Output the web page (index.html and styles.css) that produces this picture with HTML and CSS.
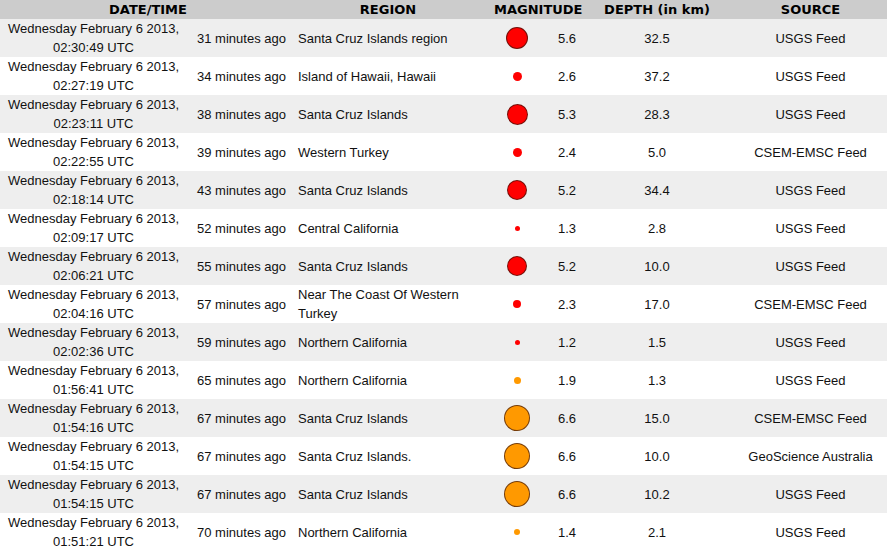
FILE: index.html
```html
<!DOCTYPE html>
<html>
<head>
<meta charset="utf-8">
<link rel="stylesheet" href="styles.css">
</head>
<body>
<table class="quakes">
  <colgroup>
    <col class="c-date"><col class="c-ago"><col class="c-region"><col class="c-dot"><col class="c-mag"><col class="c-depth"><col class="c-src">
  </colgroup>
  <thead>
    <tr><th colspan="2">DATE/TIME</th><th>REGION</th><th colspan="2" class="h-mag">MAGNITUDE</th><th>DEPTH (in km)</th><th>SOURCE</th></tr>
  </thead>
  <tbody>
    <tr><td class="date">Wednesday February 6 2013, 02:30:49 UTC</td><td class="ago">31 minutes ago</td><td class="region">Santa Cruz Islands region</td><td class="dot"><span class="q red big" style="width:22px;height:22px"></span></td><td class="mag">5.6</td><td class="depth">32.5</td><td class="src">USGS Feed</td></tr>
    <tr><td class="date">Wednesday February 6 2013, 02:27:19 UTC</td><td class="ago">34 minutes ago</td><td class="region">Island of Hawaii, Hawaii</td><td class="dot"><span class="q red" style="width:9px;height:9px"></span></td><td class="mag">2.6</td><td class="depth">37.2</td><td class="src">USGS Feed</td></tr>
    <tr><td class="date">Wednesday February 6 2013, 02:23:11 UTC</td><td class="ago">38 minutes ago</td><td class="region">Santa Cruz Islands</td><td class="dot"><span class="q red big" style="width:21px;height:21px"></span></td><td class="mag">5.3</td><td class="depth">28.3</td><td class="src">USGS Feed</td></tr>
    <tr><td class="date">Wednesday February 6 2013, 02:22:55 UTC</td><td class="ago">39 minutes ago</td><td class="region">Western Turkey</td><td class="dot"><span class="q red" style="width:9px;height:9px"></span></td><td class="mag">2.4</td><td class="depth">5.0</td><td class="src">CSEM-EMSC Feed</td></tr>
    <tr><td class="date">Wednesday February 6 2013, 02:18:14 UTC</td><td class="ago">43 minutes ago</td><td class="region">Santa Cruz Islands</td><td class="dot"><span class="q red big" style="width:20px;height:20px"></span></td><td class="mag">5.2</td><td class="depth">34.4</td><td class="src">USGS Feed</td></tr>
    <tr><td class="date">Wednesday February 6 2013, 02:09:17 UTC</td><td class="ago">52 minutes ago</td><td class="region">Central California</td><td class="dot"><span class="q red" style="width:5px;height:5px"></span></td><td class="mag">1.3</td><td class="depth">2.8</td><td class="src">USGS Feed</td></tr>
    <tr><td class="date">Wednesday February 6 2013, 02:06:21 UTC</td><td class="ago">55 minutes ago</td><td class="region">Santa Cruz Islands</td><td class="dot"><span class="q red big" style="width:20px;height:20px"></span></td><td class="mag">5.2</td><td class="depth">10.0</td><td class="src">USGS Feed</td></tr>
    <tr><td class="date">Wednesday February 6 2013, 02:04:16 UTC</td><td class="ago">57 minutes ago</td><td class="region">Near The Coast Of Western Turkey</td><td class="dot"><span class="q red" style="width:8px;height:8px"></span></td><td class="mag">2.3</td><td class="depth">17.0</td><td class="src">CSEM-EMSC Feed</td></tr>
    <tr><td class="date">Wednesday February 6 2013, 02:02:36 UTC</td><td class="ago">59 minutes ago</td><td class="region">Northern California</td><td class="dot"><span class="q red" style="width:5px;height:5px"></span></td><td class="mag">1.2</td><td class="depth">1.5</td><td class="src">USGS Feed</td></tr>
    <tr><td class="date">Wednesday February 6 2013, 01:56:41 UTC</td><td class="ago">65 minutes ago</td><td class="region">Northern California</td><td class="dot"><span class="q orange" style="width:7px;height:7px"></span></td><td class="mag">1.9</td><td class="depth">1.3</td><td class="src">USGS Feed</td></tr>
    <tr><td class="date">Wednesday February 6 2013, 01:54:16 UTC</td><td class="ago">67 minutes ago</td><td class="region">Santa Cruz Islands</td><td class="dot"><span class="q orange big" style="width:26px;height:26px"></span></td><td class="mag">6.6</td><td class="depth">15.0</td><td class="src">CSEM-EMSC Feed</td></tr>
    <tr><td class="date">Wednesday February 6 2013, 01:54:15 UTC</td><td class="ago">67 minutes ago</td><td class="region">Santa Cruz Islands.</td><td class="dot"><span class="q orange big" style="width:26px;height:26px"></span></td><td class="mag">6.6</td><td class="depth">10.0</td><td class="src">GeoScience Australia</td></tr>
    <tr><td class="date">Wednesday February 6 2013, 01:54:15 UTC</td><td class="ago">67 minutes ago</td><td class="region">Santa Cruz Islands</td><td class="dot"><span class="q orange big" style="width:26px;height:26px"></span></td><td class="mag">6.6</td><td class="depth">10.2</td><td class="src">USGS Feed</td></tr>
    <tr><td class="date">Wednesday February 6 2013, 01:51:21 UTC</td><td class="ago">70 minutes ago</td><td class="region">Northern California</td><td class="dot"><span class="q orange" style="width:6px;height:6px"></span></td><td class="mag">1.4</td><td class="depth">2.1</td><td class="src">USGS Feed</td></tr>
  </tbody>
</table>
</body>
</html>
```

FILE: styles.css
```css
html, body {
  margin: 0;
  padding: 0;
  background: #ffffff;
}

.quakes {
  width: 887px;
  border-collapse: collapse;
  border-spacing: 0;
  table-layout: fixed;
  font-family: "Liberation Sans", Arial, sans-serif;
  font-size: 13px;
  color: #111111;
}

.c-date { width: 187px; }
.c-ago { width: 109px; }
.c-region { width: 184px; }
.c-dot { width: 74px; }
.c-mag { width: 26px; }
.c-depth { width: 154px; }
.c-src { width: 153px; }

.quakes th {
  background: #cccccc;
  height: 19px;
  padding: 0;
  font-family: "DejaVu Sans", Verdana, sans-serif;
  font-weight: bold;
  font-size: 13px;
  line-height: 19px;
  color: #000000;
  text-align: center;
}

.quakes th.h-mag {
  padding-left: 14px;
}

.quakes td {
  height: 38px;
  padding: 0;
  line-height: 19px;
  vertical-align: middle;
  text-align: center;
}

.quakes tbody tr:nth-child(odd) td {
  background: #eeeeee;
}

.quakes td.region {
  text-align: left;
  padding: 0 2px;
}

.quakes td.dot {
  line-height: 0;
}

.q {
  display: inline-block;
  border-radius: 50%;
  vertical-align: middle;
  box-sizing: border-box;
}

.q.red { background: #ff0000; }
.q.orange { background: #ff9900; }
.q.big { border: 1px solid rgba(60, 20, 10, 0.7); }
```
